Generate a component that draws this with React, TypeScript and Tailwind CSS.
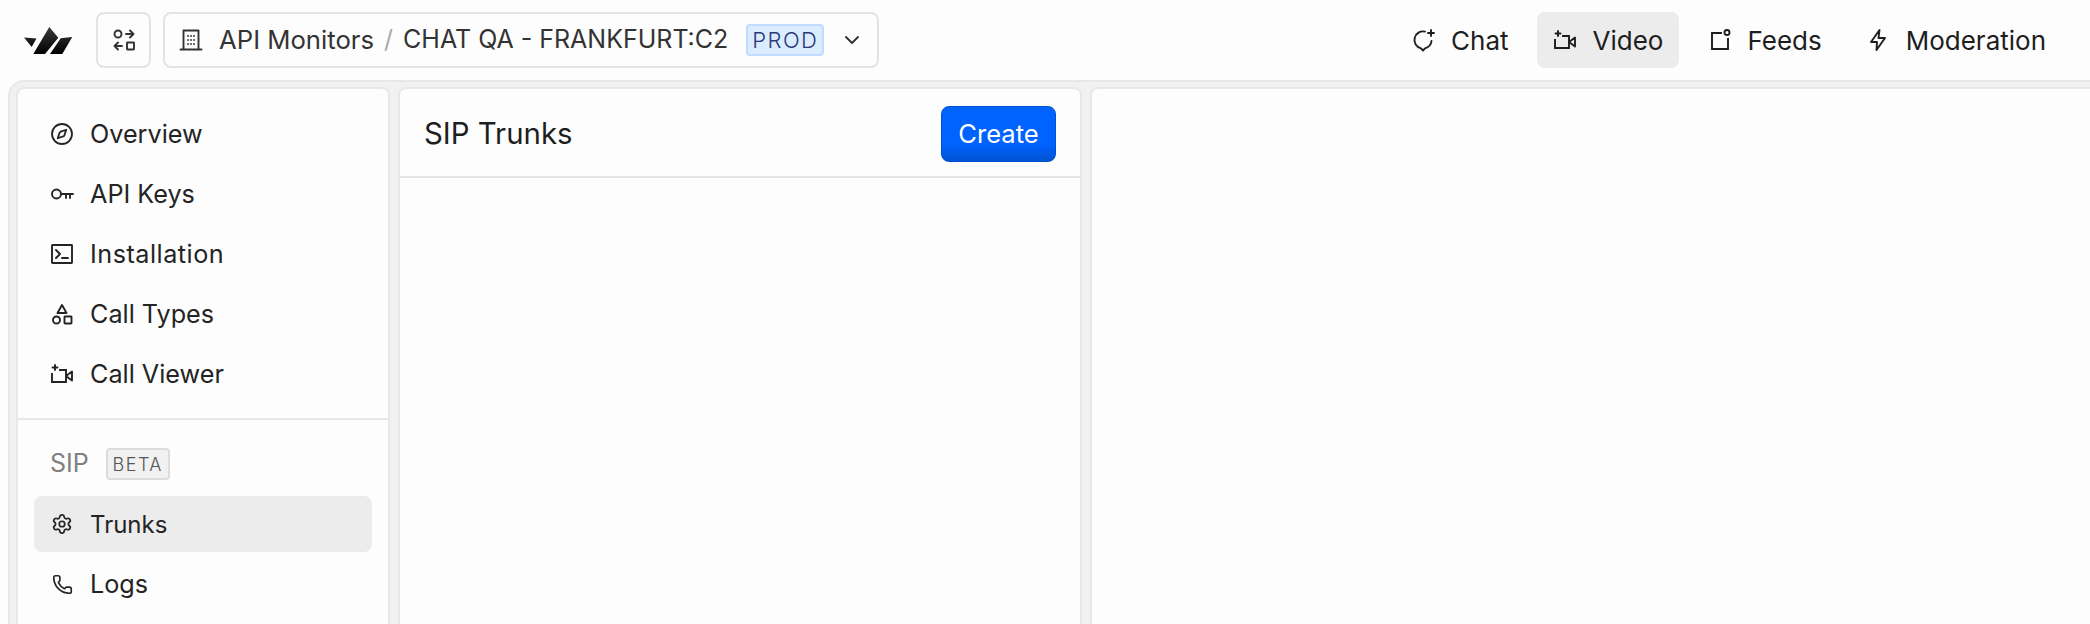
import React from "react";
import { Compass, Settings, Phone } from "lucide-react";

function Ico({ children, className = "" }: { children: React.ReactNode; className?: string }) {
  return (
    <svg viewBox="0 0 24 24" strokeWidth={1.9} strokeLinecap="round" strokeLinejoin="round" className={`stroke-current fill-none w-6 h-6 shrink-0 ${className}`}>
      {children}
    </svg>
  );
}
const VideoSpark = () => (
  <Ico>
    <path d="M5 3v5M2.500 5.500h5" />
    <path d="M10 8h6v12H2v-8" strokeLinecap="square" strokeLinejoin="miter" />
    <path d="M16 14l6-4.500v9z" />
  </Ico>
);
const Logo = () => (
  <svg viewBox="0 0 48 27" className="w-12 h-[27px] shrink-0">
    <defs>
      <linearGradient id="lg" x1="0" x2="0" y1="0" y2="1">
        <stop offset="0" stopColor="#3a3a3a" />
        <stop offset="1" stopColor="#000" />
      </linearGradient>
    </defs>
    <path fill="url(#lg)" d="M0 10.500L12.500 11.500L7.700 20Z M9.300 27L25.300 0L34.300 10.700L21 27Z M26 27L36.700 11.300L48.300 10L38.300 27Z" />
  </svg>
);

function Tab({ icon, label, active }: { icon: React.ReactNode; label: string; active?: boolean }) {
  return (
    <div className={`h-14 px-4 flex items-center gap-4 rounded-lg text-[26px] text-[#1e1e1e] ${active ? "bg-[#ececec]" : ""}`}>
      {icon}
      <span>{label}</span>
    </div>
  );
}
function Item({ icon, label, active, labelClass = "text-[25.2px]" }: { icon: React.ReactNode; label: string; active?: boolean; labelClass?: string }) {
  return (
    <div className={`h-14 pl-4 flex items-center gap-4 rounded-lg text-[#242424] ${active ? "bg-[#ececec]" : ""} mt-1 first:mt-0`}>
      {icon}
      <span className={`pt-px ${labelClass}`}>{label}</span>
    </div>
  );
}
const Small = ({ children }: { children: React.ReactNode }) => (
  <span className="w-6 h-6 shrink-0 flex items-center justify-center">{children}</span>
);

export default function App() {
  return (
    <div className="w-[2090px] h-[624px] overflow-hidden bg-[#fdfdfd] flex flex-col font-['Inter',sans-serif]">
      <header className="h-20 shrink-0 flex items-center pl-6 pr-7">
        <Logo />
        <button className="ml-6 w-[55px] h-14 rounded-lg border-2 border-[#e3e3e3] flex items-center justify-center text-[#333]">
          <Ico>
            <circle cx="6" cy="6" r="3.500" />
            <path d="M14 6h7M18 2.500l3.500 3.500-3.500 3.500" />
            <rect x="15" y="14.500" width="7" height="7" rx="0.500" />
            <path d="M10 18H3M6 14.500L2.500 18 6 21.500" />
          </Ico>
        </button>
        <div className="ml-3 h-14 w-[716px] rounded-lg border-2 border-[#e3e3e3] flex items-center pl-[14px] text-[#333]">
          <Ico>
            <path d="M4.500 21.500V2.500h15v19M1.500 21.500h21" />
            <path d="M9 8h.01M12 8h.01M15 8h.01M9 12h.01M12 12h.01M15 12h.01M9 16h.01M12 16h.01M15 16h.01" />
          </Ico>
          <span className="ml-4 text-[25.7px]">API Monitors</span>
          <span className="ml-[10px] text-[25px] text-[#aaa]">/</span>
          <span className="ml-[10px] text-[25px]">CHAT QA - FRANKFURT:C2</span>
          <span className="ml-[18px] h-8 w-[78px] rounded border-2 border-[#bfdcff] bg-[#dcecff] text-[#2a3a7a] text-[22px] font-light tracking-[1.5px] flex items-center justify-center">
            PROD
          </span>
          <Ico className="ml-4">
            <path d="M6 9l6 6 6-6" />
          </Ico>
        </div>
        <nav className="ml-auto flex items-center gap-3">
          <Tab label="Chat" icon={<Ico><path d="M14 3.600A8.500 8.500 0 0 0 10 20.300l2 2.200 2-2.200A8.500 8.500 0 0 0 20.500 13" /><path d="M20 2v6M17 5h6" /></Ico>} />
          <Tab label="Video" active icon={<VideoSpark />} />
          <Tab label="Feeds" icon={<Ico><path d="M14 5H5v16h16V11" strokeLinecap="square" strokeLinejoin="miter" /><circle cx="20" cy="4.500" r="2.500" /></Ico>} />
          <Tab label="Moderation" icon={<Ico><path d="M13.500 2L5 14h6l-.5 8L19 10h-6.500z" /></Ico>} />
        </nav>
      </header>
      <main className="flex-1 min-h-0 ml-2 rounded-tl-2xl border-l-2 border-t-2 border-[#e8e8e8] bg-[#f1f1f1] flex gap-2 pl-[6px] pt-[5px]">
        <aside className="w-[374px] shrink-0 rounded-t-lg border-2 border-b-0 border-[#e8e8e8] bg-[#fdfdfd] flex flex-col">
          <div className="h-[331px] shrink-0 px-4 pt-[17px] border-b-2 border-[#e8e8e8]">
            <Item label="Overview" icon={<Compass size={24} strokeWidth={1.8} className="shrink-0" />} />
            <Item label="API Keys" icon={<Ico><circle cx="6.500" cy="12" r="4.500" /><path d="M11 12h12M16 12v4M20 12v4" /></Ico>} />
            <Item label="Installation" labelClass="text-[25.2px] tracking-[0.5px]" icon={<Ico><rect x="2" y="3" width="20" height="18" rx="0.500" /><path d="M6 8l4 4-4 4M12 16h6" /></Ico>} />
            <Item label="Call Types" icon={<Ico><path d="M12 3l4.500 8h-9z" /><circle cx="6.500" cy="18" r="3.500" /><rect x="14.500" y="14.500" width="7" height="7" rx="0.500" /></Ico>} />
            <Item label="Call Viewer" icon={<VideoSpark />} />
          </div>
          <div className="px-4 pt-7">
            <div className="flex items-center pl-4 text-[25px] text-[#808080] h-8">
              <span>SIP</span>
              <span className="ml-[17px] h-8 w-16 rounded border-2 border-[#dcdcdc] bg-[#f1f1f1] text-[#555] text-[18px] font-light tracking-[1.5px] flex items-center justify-center">
                BETA
              </span>
            </div>
            <div className="mt-4">
              <Item label="Trunks" active labelClass="text-[24px]" icon={<Small><Settings size={22} strokeWidth={1.9} /></Small>} />
              <Item label="Logs" icon={<Small><Phone size={21} strokeWidth={1.9} /></Small>} />
            </div>
          </div>
        </aside>
        <section className="w-[684px] shrink-0 rounded-t-lg border-2 border-b-0 border-[#e8e8e8] bg-[#fdfdfd]">
          <div className="h-[89px] pt-[3px] border-b-2 border-[#e4e4e4] flex items-center justify-between px-6">
            <span className="pt-px text-[29.4px] text-[#1e1e1e]">SIP Trunks</span>
            <button className="w-[115px] h-14 pt-px rounded-lg bg-gradient-to-b from-[#0062ff] from-70% to-[#0052d0] border border-[#0052d0] text-white text-[25.6px]">
              Create
            </button>
          </div>
        </section>
        <section className="flex-1 rounded-tl-lg border-2 border-r-0 border-b-0 border-[#e8e8e8] bg-[#fdfdfd]" />
      </main>
    </div>
  );
}
